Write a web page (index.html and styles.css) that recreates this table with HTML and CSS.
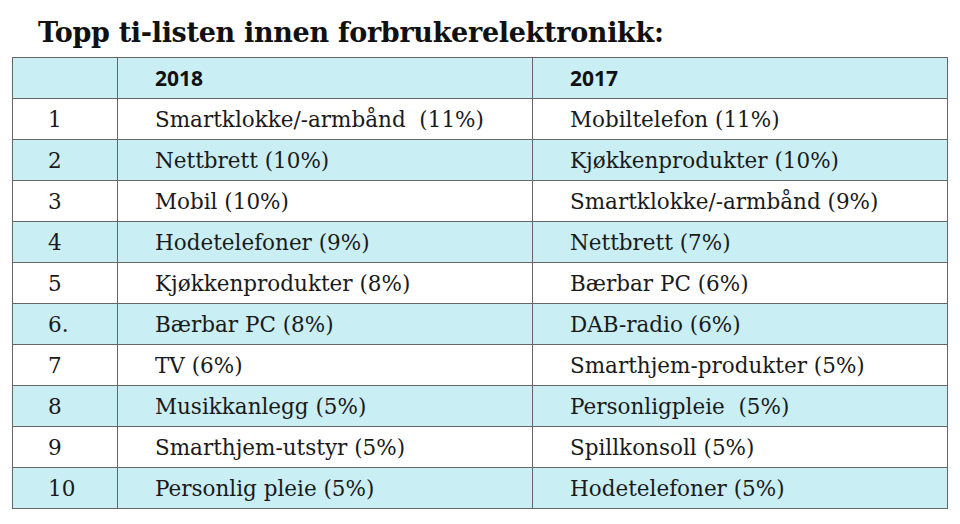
FILE: index.html
```html
<!DOCTYPE html>
<html lang="no">
<head>
<meta charset="utf-8">
<link rel="stylesheet" href="styles.css">
</head>
<body>
<h1 class="title">Topp ti-listen innen forbrukerelektronikk:</h1>
<table class="list">
  <colgroup><col class="c-rank"><col class="c-year"><col class="c-year"></colgroup>
  <thead>
    <tr class="alt"><th></th><th>2018</th><th>2017</th></tr>
  </thead>
  <tbody>
    <tr><td>1</td><td>Smartklokke/-armbånd&nbsp; (11%)</td><td>Mobiltelefon (11%)</td></tr>
    <tr class="alt"><td>2</td><td>Nettbrett (10%)</td><td>Kjøkkenprodukter (10%)</td></tr>
    <tr><td>3</td><td>Mobil (10%)</td><td>Smartklokke/-armbånd (9%)</td></tr>
    <tr class="alt"><td>4</td><td>Hodetelefoner (9%)</td><td>Nettbrett (7%)</td></tr>
    <tr><td>5</td><td>Kjøkkenprodukter (8%)</td><td>Bærbar PC (6%)</td></tr>
    <tr class="alt"><td>6.</td><td>Bærbar PC (8%)</td><td>DAB-radio (6%)</td></tr>
    <tr><td>7</td><td>TV (6%)</td><td>Smarthjem-produkter (5%)</td></tr>
    <tr class="alt"><td>8</td><td>Musikkanlegg (5%)</td><td>Personligpleie&nbsp; (5%)</td></tr>
    <tr><td>9</td><td>Smarthjem-utstyr (5%)</td><td>Spillkonsoll (5%)</td></tr>
    <tr class="alt"><td>10</td><td>Personlig pleie (5%)</td><td>Hodetelefoner (5%)</td></tr>
  </tbody>
</table>
</body>
</html>
```
FILE: styles.css
```css
html, body {
  margin: 0;
  padding: 0;
  background: #ffffff;
}
body {
  padding: 18px 0 0 12px;
  color: #1a1a1a;
}
.title {
  margin: 0 0 0 26px;
  font-family: "DejaVu Serif", serif;
  font-weight: 900;
  font-size: 27px;
  line-height: 30px;
  height: 39px;
  color: #111;
  letter-spacing: -0.3px;
}
.list {
  border-collapse: collapse;
  width: 934px;
  table-layout: fixed;
  font-family: "DejaVu Serif", serif;
  font-size: 21.5px;
}
.c-rank { width: 105px; }
.c-year { width: 415px; }
.list th, .list td {
  border: 1.5px solid #666;
  height: 41px;
  padding: 0 0 0 37px;
  text-align: left;
  vertical-align: middle;
  white-space: nowrap;
  box-sizing: border-box;
  font-weight: 300;
}
.list td:first-child {
  padding-left: 35px;
}
.list th {
  font-family: "Open Sans", sans-serif;
  font-weight: 700;
  font-size: 21px;
  color: #111;
}
.list tr.alt {
  background: #c9eef4;
}
```
